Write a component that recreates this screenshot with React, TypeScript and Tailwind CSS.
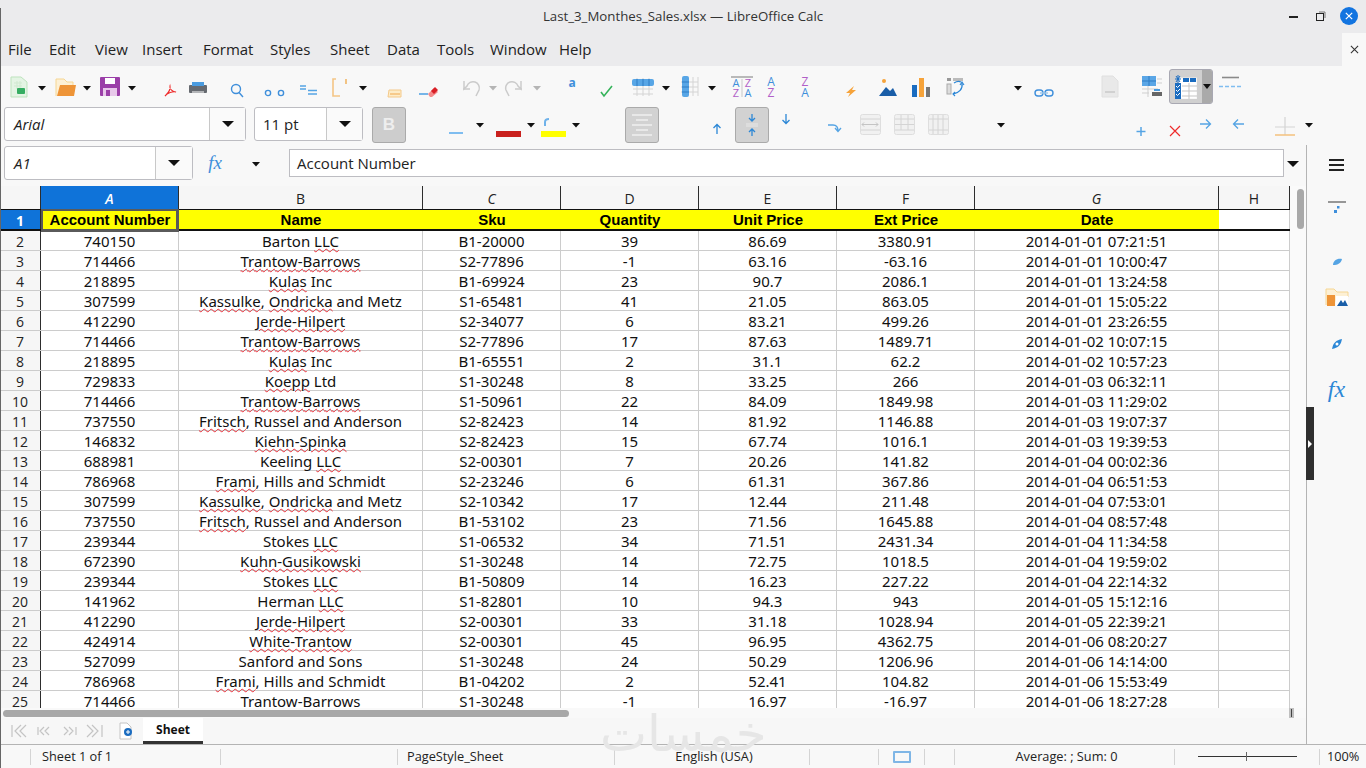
import type { ReactNode } from "react"

const ui = "font-['Open_Sans',sans-serif]"

const rows = [
  [2, "740150", "Barton ~LLC~", "B1-20000", "39", "86.69", "3380.91", "2014-01-01 07:21:51"],
  [3, "714466", "~Trantow-Barrows~", "S2-77896", "-1", "63.16", "-63.16", "2014-01-01 10:00:47"],
  [4, "218895", "~Kulas~ Inc", "B1-69924", "23", "90.7", "2086.1", "2014-01-01 13:24:58"],
  [5, "307599", "~Kassulke~, ~Ondricka~ and Metz", "S1-65481", "41", "21.05", "863.05", "2014-01-01 15:05:22"],
  [6, "412290", "~Jerde-Hilpert~", "S2-34077", "6", "83.21", "499.26", "2014-01-01 23:26:55"],
  [7, "714466", "~Trantow-Barrows~", "S2-77896", "17", "87.63", "1489.71", "2014-01-02 10:07:15"],
  [8, "218895", "~Kulas~ Inc", "B1-65551", "2", "31.1", "62.2", "2014-01-02 10:57:23"],
  [9, "729833", "~Koepp~ Ltd", "S1-30248", "8", "33.25", "266", "2014-01-03 06:32:11"],
  [10, "714466", "~Trantow-Barrows~", "S1-50961", "22", "84.09", "1849.98", "2014-01-03 11:29:02"],
  [11, "737550", "~Fritsch~, Russel and Anderson", "S2-82423", "14", "81.92", "1146.88", "2014-01-03 19:07:37"],
  [12, "146832", "~Kiehn-Spinka~", "S2-82423", "15", "67.74", "1016.1", "2014-01-03 19:39:53"],
  [13, "688981", "Keeling ~LLC~", "S2-00301", "7", "20.26", "141.82", "2014-01-04 00:02:36"],
  [14, "786968", "~Frami~, Hills and Schmidt", "S2-23246", "6", "61.31", "367.86", "2014-01-04 06:51:53"],
  [15, "307599", "~Kassulke~, ~Ondricka~ and Metz", "S2-10342", "17", "12.44", "211.48", "2014-01-04 07:53:01"],
  [16, "737550", "~Fritsch~, Russel and Anderson", "B1-53102", "23", "71.56", "1645.88", "2014-01-04 08:57:48"],
  [17, "239344", "Stokes ~LLC~", "S1-06532", "34", "71.51", "2431.34", "2014-01-04 11:34:58"],
  [18, "672390", "~Kuhn-Gusikowski~", "S1-30248", "14", "72.75", "1018.5", "2014-01-04 19:59:02"],
  [19, "239344", "Stokes ~LLC~", "B1-50809", "14", "16.23", "227.22", "2014-01-04 22:14:32"],
  [20, "141962", "Herman ~LLC~", "S1-82801", "10", "94.3", "943", "2014-01-05 15:12:16"],
  [21, "412290", "~Jerde-Hilpert~", "S2-00301", "33", "31.18", "1028.94", "2014-01-05 22:39:21"],
  [22, "424914", "~White-Trantow~", "S2-00301", "45", "96.95", "4362.75", "2014-01-06 08:20:27"],
  [23, "527099", "Sanford and Sons", "S1-30248", "24", "50.29", "1206.96", "2014-01-06 14:14:00"],
  [24, "786968", "~Frami~, Hills and Schmidt", "B1-04202", "2", "52.41", "104.82", "2014-01-06 15:53:49"],
  [25, "714466", "Trantow-Barrows", "S1-30248", "-1", "16.97", "-16.97", "2014-01-06 18:27:28"],
]

const colWidths = ["w-[138px]", "w-[244px]", "w-[138px]", "w-[138px]", "w-[138px]", "w-[138px]", "w-[244px]", "w-[71px]"]
const headers = ["Account Number", "Name", "Sku", "Quantity", "Unit Price", "Ext Price", "Date"]
const colNames = ["A", "B", "C", "D", "E", "F", "G", "H"]

const menus = [
  { label: "File", cls: "w-[41px]" },
  { label: "Edit", cls: "w-[46px]" },
  { label: "View", cls: "w-[47px]" },
  { label: "Insert", cls: "w-[61px]" },
  { label: "Format", cls: "w-[67px]" },
  { label: "Styles", cls: "w-[60px]" },
  { label: "Sheet", cls: "w-[57px]" },
  { label: "Data", cls: "w-[50px]" },
  { label: "Tools", cls: "w-[53px]" },
  { label: "Window", cls: "w-[69px]" },
  { label: "Help", cls: "w-[50px]" },
]

// every icon sits in a 20x22 box, row centre is y=11
const I = ({ cls = "", children }: { cls?: string; children: ReactNode }) => (
  <svg viewBox="0 0 20 22" className={`w-5 h-[22px] shrink-0 overflow-visible ${cls}`}>
    {children}
  </svg>
)

const Drop = ({ cls = "", color = "#111" }: { cls?: string; color?: string }) => (
  <I cls={cls}>
    <polygon points="6,10 14,10 10,14.5" fill={color} />
  </I>
)

const Name = ({ text }: { text: string }) => (
  <>
    {text.split("~").map((part, i) =>
      i % 2 === 1 ? (
        <span key={i} className="underline decoration-wavy decoration-[#e8303a] decoration-1 underline-offset-1">
          {part}
        </span>
      ) : (
        <span key={i}>{part}</span>
      ),
    )}
  </>
)

const TableIcon = ({ cls = "", children }: { cls?: string; children?: ReactNode }) => (
  <I cls={cls}>
    <rect x="0.500" y="0.500" width="20" height="20" rx="2" fill="#f1f1f1" stroke="#dedede" />
    <path d="M1 5h19M1 16h19" stroke="#d4d4d4" fill="none" />
    {children}
  </I>
)

function ToolbarOne() {
  return (
    <div className="h-[41px] flex items-center pl-[9px] bg-[#f8f8f8]">
      <I>
        <path d="M2 1h10l6 5v15H2z" fill="#e4f4e4" stroke="#bde3bd" />
        <path d="M5 7h8M5 10h8M8 5v8M11 5v8" stroke="#cfe8cf" />
        <rect x="8" y="12" width="8" height="6" rx="1" fill="#36ad62" />
      </I>
      <Drop cls="ml-[3px]" />
      <I cls="ml-[3px]">
        <path d="M1 20V3h8l3 3h6v4" fill="#fdf0d4" stroke="#f6d693" />
        <polygon points="2,20 5,9 21,9 19,20" fill="#ee9437" />
      </I>
      <Drop cls="ml-[2px]" />
      <I cls="ml-[3px]">
        <rect x="0" y="1" width="20" height="19" rx="1" fill="#9b3fa8" />
        <rect x="5" y="2" width="10" height="6" fill="#fff" />
        <rect x="3" y="12" width="14" height="8" fill="#e8c8ea" />
        <rect x="6" y="14" width="4" height="6" fill="#9b3fa8" />
      </I>
      <Drop cls="ml-[2px]" />
      <I cls="ml-[18px]">
        <path d="M10 10c1 5-3 8-5 10 2-3 8-5 11-4-3 0-7-3-6-6z" fill="none" stroke="#ef2b2b" strokeWidth="1.1" />
      </I>
      <I cls="ml-[8px]">
        <rect x="1" y="9" width="18" height="8" rx="1" fill="#666a70" />
        <rect x="4" y="6" width="12" height="4" fill="#4a9bdf" />
        <rect x="4" y="15" width="12" height="2" fill="#fff" opacity=".5" />
      </I>
      <I cls="ml-[19px]">
        <circle cx="9" cy="13" r="4.5" fill="none" stroke="#3f8fdb" strokeWidth="1.4" />
        <path d="M12 16.5l4 4.5" stroke="#3f8fdb" strokeWidth="1.4" />
      </I>
      <I cls="ml-[17px]">
        <circle cx="4" cy="17" r="2.6" fill="none" stroke="#3f8fdb" strokeWidth="1.4" />
        <circle cx="17" cy="17" r="2.6" fill="none" stroke="#3f8fdb" strokeWidth="1.4" />
      </I>
      <I cls="ml-[14px]">
        <path d="M2 10h6M2 13h6M10 14.5h9M10 18h9" stroke="#55a4e4" strokeWidth="1.6" />
      </I>
      <I cls="ml-[12px]">
        <path d="M6 3H3v17h7" fill="none" stroke="#f4c585" strokeWidth="1.6" />
        <path d="M16 3v5" stroke="#f0b666" strokeWidth="1.6" />
      </I>
      <Drop cls="ml-[3px]" />
      <I cls="ml-[12px]">
        <path d="M4 14h12v7H3z" fill="#fdecc8" stroke="#f4c98a" />
        <path d="M5 18h10" stroke="#f0a84e" />
      </I>
      <I cls="ml-[13px]">
        <path d="M1 18h9" stroke="#55a4e4" strokeWidth="1.6" />
        <path d="M10 18l6-6 4 4-6 5h-2z" fill="#f58a8a" />
        <path d="M13 15l4-4 3 3-4 4z" fill="#d81f26" />
      </I>
      <I cls="ml-[22px]">
        <path d="M16 20l3-6a6 6 0 0 0-12-4L4 13V5" fill="none" stroke="#cbcbcb" strokeWidth="1.5" />
        <path d="M3 13h7" stroke="#cbcbcb" strokeWidth="1.5" />
      </I>
      <Drop cls="ml-[3px]" color="#b5b5b5" />
      <I cls="ml-[2px]">
        <path d="M4 20l-3-6a6 6 0 0 1 12-4l3 3V5" fill="none" stroke="#cbcbcb" strokeWidth="1.5" />
        <path d="M17 13h-7" stroke="#cbcbcb" strokeWidth="1.5" />
      </I>
      <Drop cls="ml-[2px]" color="#b5b5b5" />
      <I cls="ml-[15px]">
        <text x="10" y="11" textAnchor="middle" fontSize="12" fontWeight="700" fill="#3f8fdb" fontFamily="Open Sans, sans-serif">a</text>
      </I>
      <I cls="ml-[15px]">
        <path d="M4 16l3 4 8-10" fill="none" stroke="#35b35a" strokeWidth="1.6" />
      </I>
      <I cls="ml-[16px]">
        <path d="M4 2v18M10 2v18M16 2v18M0 13h20M0 18h20" stroke="#d4d4d4" />
        <rect x="-1" y="3" width="22" height="7" rx="2" fill="#58a6e6" />
        <path d="M4 3v7M10 3v7M16 3v7" stroke="#2f7cc5" />
      </I>
      <Drop cls="ml-[3px]" />
      <I cls="ml-[3px]">
        <path d="M2 6h17M2 11h17M2 16h17M14 1v19M19 1v19" stroke="#d4d4d4" />
        <rect x="3" y="0" width="7" height="21" rx="2" fill="#58a6e6" />
        <path d="M3 6h7M3 11h7M3 16h7" stroke="#2f7cc5" />
      </I>
      <Drop cls="ml-[3px]" />
      <I cls="ml-[10px]">
        <path d="M-1 1h22" stroke="#8f8f8f" strokeWidth="1.2" />
        <path d="M10 3v18" stroke="#c8c8c8" />
        <g fontSize="11" fontFamily="Open Sans, sans-serif" textAnchor="middle">
          <text x="4" y="11" fill="#3f8fdb">A</text>
          <text x="4" y="21" fill="#b15fc8">Z</text>
          <text x="16" y="11" fill="#b15fc8">Z</text>
          <text x="16" y="21" fill="#3f8fdb">A</text>
        </g>
      </I>
      <I cls="ml-[9px]">
        <g fontSize="12" fontFamily="Open Sans, sans-serif" textAnchor="middle">
          <text x="10" y="10" fill="#3f8fdb">A</text>
          <text x="10" y="21" fill="#b15fc8">Z</text>
        </g>
      </I>
      <I cls="ml-[14px]">
        <g fontSize="12" fontFamily="Open Sans, sans-serif" textAnchor="middle">
          <text x="10" y="10" fill="#b15fc8">Z</text>
          <text x="10" y="21" fill="#3f8fdb">A</text>
        </g>
      </I>
      <I cls="ml-[26px]">
        <polygon points="13,10 5,17 9,17 7,21 15,14 11,14" fill="#f6a33a" />
      </I>
      <I cls="ml-[17px]">
        <polygon points="1,20 8,11 12,15 15,12 19,20" fill="#1a5ea8" />
        <circle cx="6" cy="5" r="2" fill="#f6a33a" />
      </I>
      <I cls="ml-[13px]">
        <rect x="1" y="9" width="5" height="12" fill="#1a6cc0" />
        <rect x="8" y="2" width="5" height="19" fill="#f6a33a" />
        <rect x="15" y="11" width="4" height="10" fill="#777" />
      </I>
      <I cls="ml-[14px]">
        <rect x="2" y="2" width="4" height="3" fill="#999" />
        <rect x="8" y="2" width="10" height="3" fill="#bbb" />
        <rect x="2" y="8" width="4" height="10" fill="#ddd" stroke="#aaa" />
        <path d="M17 7c1 6-3 10-9 11M9 7c3-2 5-2 7-1" fill="none" stroke="#2c87d6" strokeWidth="1.3" />
        <path d="M15 9l2-3 2 3M10 16l-2 2 2 2" fill="none" stroke="#2c87d6" strokeWidth="1.1" />
      </I>
      <Drop cls="ml-[43px]" />
      <I cls="ml-[6px]">
        <rect x="1" y="14" width="8" height="6" rx="3" fill="none" stroke="#3f8fdb" strokeWidth="1.4" />
        <rect x="11" y="14" width="8" height="6" rx="3" fill="none" stroke="#3f8fdb" strokeWidth="1.4" />
        <path d="M6 17h8" stroke="#9cc6ea" strokeWidth="1.4" />
      </I>
      <I cls="ml-[46px]">
        <path d="M2 0h11l5 5v16H2z" fill="#e9e9e9" stroke="#e0e0e0" />
        <path d="M5 16h10" stroke="#c9c9c9" strokeWidth="1.5" />
      </I>
      <I cls="ml-[22px]">
        <rect x="0" y="0" width="14" height="10" fill="#5aa6e6" />
        <path d="M0 5h14M7 0v10" stroke="#2f7cc5" />
        <path d="M15 3h5M15 7h5M0 13h16M6 10v11M0 17h7" stroke="#cfcfcf" />
        <rect x="10" y="16" width="10" height="4" fill="#666" />
        <rect x="12" y="13" width="6" height="2" fill="#4a9bdf" />
      </I>
      <div className="ml-[7px] w-[44px] h-[35px] flex rounded-[3px] border border-[#a8a8b2] bg-[#d0d0d0] shrink-0 overflow-hidden">
        <div className="w-[32px] flex items-center justify-center">
          <svg viewBox="0 0 22 24" className="w-[22px] h-6">
            <rect x="4" y="3" width="18" height="21" fill="#fff" stroke="#f0f0f0" />
            <path d="M7 11h15M7 16h15M7 21h15M14 8v16" stroke="#c5c5c5" />
            <rect x="0" y="8" width="6" height="16" fill="#1a6cc0" />
            <path d="M1 11l1.5 1.5L5 10M1 15l1.5 1.5L5 14M1 19l1.5 1.5L5 18" fill="none" stroke="#fff" />
            <rect x="8" y="3" width="6" height="4" fill="#1a6cc0" />
            <rect x="15" y="3" width="6" height="4" fill="#1a6cc0" />
            <path d="M3 0v8M0 4h6M1 1l4 6M5 1l-4 6" stroke="#1a6cc0" />
          </svg>
        </div>
        <div className="flex-1 bg-[#aaaaaa] flex items-center justify-center">
          <span className="w-0 h-0 border-x-4 border-x-transparent border-t-[5px] border-t-[#111]" />
        </div>
      </div>
      <I cls="ml-[6px]">
        <path d="M3 1.5h17" stroke="#8a8a8a" strokeWidth="1.6" />
        <path d="M0 10.5h23" stroke="#7fbdf0" strokeWidth="1.5" strokeDasharray="4 2" />
      </I>
    </div>
  )
}

function ToolbarTwo() {
  return (
    <div className={`h-[38px] flex items-start pl-1 bg-[#f8f8f8] text-[15px] text-[#222] ${ui}`}>
      <div className="w-[242px] h-[34px] flex shrink-0 rounded-[3px] border border-[#bdbdc2] bg-white">
        <div className="w-[204px] pl-[9px] flex items-center italic">Arial</div>
        <div className="flex-1 border-l border-[#c8c8c8] bg-[#fafafa] flex items-center justify-center">
          <span className="w-0 h-0 border-x-[6px] border-x-transparent border-t-[6px] border-t-[#111]" />
        </div>
      </div>
      <div className="ml-2 w-[109px] h-[34px] flex shrink-0 rounded-[3px] border border-[#bdbdc2] bg-white">
        <div className="w-[71px] pl-[8px] flex items-center">11 pt</div>
        <div className="flex-1 border-l border-[#c8c8c8] bg-[#fafafa] flex items-center justify-center">
          <span className="w-0 h-0 border-x-[6px] border-x-transparent border-t-[6px] border-t-[#111]" />
        </div>
      </div>
      <div className="ml-[9px] w-[34px] h-9 shrink-0 rounded-[3px] border border-[#aaa] bg-[#cdcdcd] flex items-center justify-center font-['Liberation_Sans',sans-serif] text-[17px] font-bold text-[#eee]">
        B
      </div>
      <div className="ml-[43px] w-[14px] h-[27px] shrink-0 flex items-end">
        <div className="w-full h-[2px] bg-[#7fbdf0]" />
      </div>
      <Drop cls="ml-[7px] mt-[6px]" />
      <div className="ml-[6px] w-[25px] h-[30px] shrink-0 flex items-end">
        <div className="w-full h-[6px] bg-[#c9211e]" />
      </div>
      <Drop cls="mt-[6px]" />
      <div className="w-[25px] h-[30px] shrink-0 flex flex-col justify-end">
        <svg viewBox="0 0 25 14" className="w-[25px] h-[14px]">
          <path d="M4 9V5c0-2 1-3 4-3" fill="none" stroke="#6fb2ea" strokeWidth="2" />
        </svg>
        <div className="w-full h-[6px] bg-[#ffff00]" />
      </div>
      <Drop cls="mt-[6px]" />
      <div className="ml-[39px] w-[34px] h-9 shrink-0 rounded-[3px] border border-[#aaa] bg-[#d2d2d2] flex flex-col items-center justify-center gap-[3px]">
        <div className="w-5 h-[2px] bg-[#e8e8e8]" />
        <div className="w-3 h-[2px] bg-[#e8e8e8]" />
        <div className="w-5 h-[2px] bg-[#e8e8e8]" />
        <div className="w-3 h-[2px] bg-[#e8e8e8]" />
        <div className="w-5 h-[2px] bg-[#e8e8e8]" />
      </div>
      <I cls="ml-[48px] mt-[7px]">
        <path d="M10 20V11M6.5 14L10 10.5l3.5 3.5" fill="none" stroke="#2c87d6" strokeWidth="1.3" />
      </I>
      <div className="ml-[8px] w-[34px] h-9 shrink-0 rounded-[3px] border border-[#aaa] bg-[#d2d2d2] flex items-center justify-center">
        <svg viewBox="0 0 20 26" className="w-5 h-[26px]">
          <path d="M4 12h12M4 14h12" stroke="#e8e8e8" />
          <path d="M10 2v7M7 6l3 3 3-3M10 24v-7M7 20l3-3 3 3" fill="none" stroke="#2c87d6" strokeWidth="1.3" />
        </svg>
      </div>
      <I cls="ml-[7px] mt-[4px]">
        <path d="M10 3v9M6.5 9l3.5 3.5L13.500 9" fill="none" stroke="#2c87d6" strokeWidth="1.3" />
      </I>
      <I cls="ml-[28px] mt-[7px]">
        <path d="M4 11h5c3 0 5 2 5 6M11 14l3 3.500 3-3.500" fill="none" stroke="#55a4e4" strokeWidth="1.300" />
      </I>
      <TableIcon cls="ml-[16px] mt-[7px]">
        <path d="M2 10.500h16M4 8.500l-2 2 2 2M16 8.500l2 2-2 2" fill="none" stroke="#c4c4c4" />
      </TableIcon>
      <TableIcon cls="ml-[14px] mt-[7px]">
        <path d="M7 1v15M14 1v15M1 10.500h19" stroke="#d4d4d4" />
      </TableIcon>
      <TableIcon cls="ml-[14px] mt-[7px]">
        <path d="M5 1v19M10 1v19M15 1v19" stroke="#d4d4d4" />
      </TableIcon>
      <Drop cls="ml-[43px] mt-[6px]" />
      <I cls="ml-[120px] mt-[9px]">
        <path d="M10 11v9M5.500 15.500h9" stroke="#55a4e4" strokeWidth="1.500" />
      </I>
      <I cls="ml-[14px] mt-[9px]">
        <path d="M5 10l10 10M15 10L5 20" stroke="#ee2b2b" strokeWidth="1.200" />
      </I>
      <I cls="ml-[10px] mt-[10px]">
        <path d="M5 7h10M11 2.500L15.500 7 11 11.500" fill="none" stroke="#55a4e4" strokeWidth="1.300" />
      </I>
      <I cls="ml-[14px] mt-[10px]">
        <path d="M15 7H5M9 2.500L4.500 7 9 11.500" fill="none" stroke="#55a4e4" strokeWidth="1.300" />
      </I>
      <I cls="ml-[26px] mt-[10px]">
        <path d="M10 0v18M0 10h20" stroke="#d4d4d4" strokeWidth="1.200" />
        <path d="M0 18h20" stroke="#f4c585" strokeWidth="1.600" />
      </I>
      <Drop cls="ml-[4px] mt-[6px]" />
    </div>
  )
}

function Sheet() {
  return (
    <div className="h-[522px] shrink-0 flex bg-white overflow-hidden">
      <div className="w-[1290px] shrink-0">
        <div className={`h-[23px] flex bg-[#f6f6f6] text-[14px] text-[#222] ${ui}`}>
          <div className="w-[41px] shrink-0 border-r border-[#2d2d2d]" />
          {colNames.map((c, i) => (
            <div
              key={c}
              className={`${colWidths[i]} shrink-0 border-r border-[#2d2d2d] pt-[2px] flex items-center justify-center ${
                c === "A" ? "bg-[#0f73d9] text-white italic font-semibold" : c === "C" || c === "G" ? "italic" : ""
              }`}
            >
              {c}
            </div>
          ))}
        </div>
        <div className="h-[22px] flex border-t border-b-2 border-[#111] relative">
          <div className={`w-[41px] shrink-0 bg-[#0f73d9] text-white text-[14px] font-bold pt-[2px] flex items-center justify-center border-r border-[#2d2d2d] ${ui}`}>
            1
          </div>
          {headers.map((h, i) => (
            <div
              key={h}
              className={`${colWidths[i]} shrink-0 bg-[#ffff00] pt-[2px] flex items-center justify-center font-['Liberation_Sans',sans-serif] text-[15px] font-bold text-black`}
            >
              {h}
            </div>
          ))}
          <div className="w-[71px] shrink-0 border-r border-[#ccc]" />
          <div className="absolute left-[41px] -top-px w-[138px] h-[23px] border-2 border-r-[3px] border-b-[3px] border-[#5a5a5a]" />
        </div>
        {rows.map((r) => (
          <div key={r[0]} className="h-5 flex border-b border-[#cccccc] font-['Noto_Sans',sans-serif] text-[15px] leading-[21px] text-[#111]">
            <div className={`w-[41px] shrink-0 bg-[#f6f6f6] border-r border-[#2d2d2d] text-center text-[14px] text-[#222] ${ui}`}>{r[0]}</div>
            {r.slice(1).map((v, i) => (
              <div key={i} className={`${colWidths[i]} shrink-0 text-center border-r border-[#cccccc] whitespace-nowrap`}>
                {i === 1 ? <Name text={String(v)} /> : v}
              </div>
            ))}
            <div className="w-[71px] shrink-0 border-r border-[#cccccc]" />
          </div>
        ))}
      </div>
      <div className="flex-1 bg-[#fafafa] pl-[7px] pt-[3px]">
        <div className="w-[7px] h-10 rounded-full bg-[#a9a9a9]" />
      </div>
    </div>
  )
}

export default function App() {
  return (
    <div className={`relative w-[1366px] h-[768px] flex flex-col overflow-hidden bg-[#f8f8f8] ${ui}`}>
      <div className="h-[33px] shrink-0 bg-[#ebebed] flex items-center relative">
        <div className="w-full text-center text-[13.25px] text-[#333]">Last_3_Monthes_Sales.xlsx — LibreOffice Calc</div>
        <div className="absolute right-2 top-[7px] flex items-center">
          <div className="w-[9px] h-[2px] mt-[2px] bg-[#222]" />
          <svg viewBox="0 0 10 10" className="ml-[18px] w-[10px] h-[10px]">
            <rect x="0.500" y="2.500" width="7" height="7" fill="none" stroke="#222" />
            <path d="M3 1h6v6" fill="none" stroke="#777" />
          </svg>
          <div className="ml-[14px] w-[18px] h-[18px] rounded-full bg-[#1274e0] text-white flex items-center justify-center">
            <svg viewBox="0 0 10 10" className="w-2 h-2"><path d="M1 1l8 8M9 1l-8 8" stroke="#fff" strokeWidth="1.500" /></svg>
          </div>
        </div>
      </div>

      <div className="h-[33px] shrink-0 flex items-stretch bg-[#ebebed] pl-[8px] text-[15px] text-[#222]">
        <div className="flex items-center flex-1">
          {menus.map((m) => (
            <div key={m.label} className={m.cls}>{m.label}</div>
          ))}
        </div>
        <div className="w-[24px] bg-[#f8f8f8] flex items-center justify-center">
          <svg viewBox="0 0 10 10" className="w-[9px] h-[9px]"><path d="M1 1l8 8M9 1l-8 8" stroke="#333" strokeWidth="1.200" /></svg>
        </div>
      </div>

      <ToolbarOne />
      <ToolbarTwo />

      <div className="flex-1 flex min-h-0">
        <div className="w-[1306px] shrink-0 flex flex-col">
          <div className="h-[41px] shrink-0 flex items-start pl-1 pt-px text-[15px] text-[#222]">
            <div className="w-[189px] h-[34px] flex shrink-0 rounded-[3px] border border-[#bdbdc2] bg-white">
              <div className="w-[150px] pl-[9px] flex items-center italic">A1</div>
              <div className="flex-1 border-l border-[#c8c8c8] bg-[#fafafa] flex items-center justify-center">
                <span className="w-0 h-0 border-x-[6px] border-x-transparent border-t-[6px] border-t-[#111]" />
              </div>
            </div>
            <div className="ml-[12px] w-5 h-[34px] flex items-center justify-center font-['Liberation_Serif',serif] italic text-[19px] text-[#3f8fdb]">fx</div>
            <Drop cls="ml-[21px] mt-[6px]" />
            <div className="ml-[23px] w-[995px] h-7 mt-[3px] shrink-0 border border-[#bdbdc2] bg-white pl-[7px] flex items-center">Account Number</div>
            <div className="ml-[3px] mt-[15px] w-0 h-0 border-x-[6px] border-x-transparent border-t-[6px] border-t-[#111]" />
          </div>

          <Sheet />

          <div className="h-[10px] shrink-0 bg-[#f9f9f9] flex items-center pl-[3px] pr-[12px]">
            <div className="w-[566px] h-[7px] rounded-full bg-[#a8a8a8]" />
            <div className="ml-auto w-[5px] h-[10px] bg-[#c0c0c0] flex justify-center"><div className="w-px h-2 mt-px bg-[#444]" /></div>
          </div>

          <div className="h-[26px] shrink-0 flex items-center pl-[10px] bg-[#f7f7f7]">
            <svg viewBox="0 0 94 14" className="w-[94px] h-[16px]">
              <g fill="none" stroke="#c4c4c4" strokeWidth="1.200">
                <path d="M2 1v12M11 1L5 7l6 6M16 1l-6 6 6 6" />
                <path d="M28 3v8M34 3l-4 4 4 4M39 3l-4 4 4 4" />
                <path d="M54 3l4 4-4 4M59 3l4 4-4 4M66 3v8" />
                <path d="M77 1l6 6-6 6M82 1l6 6-6 6M92 1v12" />
              </g>
            </svg>
            <svg viewBox="0 0 14 18" className="ml-[15px] w-[14px] h-[18px]">
              <path d="M1 1h7l4 4v12H1z" fill="#fff" stroke="#c4c4c4" />
              <circle cx="9" cy="10" r="4" fill="#1a6cc0" />
              <path d="M7 10h4M9 8v4" stroke="#fff" />
            </svg>
            <div className="ml-[10px] w-[60px] h-[26px] bg-white border-b-[3px] border-[#333] flex items-center justify-center text-[12px] font-bold text-[#111]">Sheet</div>
          </div>
        </div>

        <div className="flex-1 border-l border-[#b4b4b4] bg-[#f8f8f8] relative flex flex-col items-center">
          <div className="mt-[14px] w-[15px] flex flex-col gap-[3px]">
            <div className="h-[2px] bg-[#222]" />
            <div className="h-[2px] bg-[#222]" />
            <div className="h-[2px] bg-[#222]" />
          </div>
          <svg viewBox="0 0 20 16" className="mt-[30px] w-5 h-4">
            <path d="M1 1h18" stroke="#777" strokeWidth="1.500" />
            <rect x="10" y="5" width="2.500" height="2.500" fill="#3f8fdb" />
            <rect x="7" y="9" width="3" height="3" fill="#3f8fdb" />
          </svg>
          <svg viewBox="0 0 12 10" className="mt-[39px] w-3 h-[10px]">
            <path d="M2 9c0-4 4-7 9-6-1 4-4 6-9 6z" fill="#55a4e4" />
          </svg>
          <svg viewBox="0 0 24 20" className="mt-[21px] w-6 h-5">
            <path d="M1 18V2h8l3 3h11v5" fill="#fdf0d4" stroke="#f6d693" />
            <rect x="2" y="8" width="8" height="11" fill="#ee9437" />
            <rect x="11" y="9" width="12" height="10" fill="#fff" />
            <polygon points="12,19 16,13 18,16 20,13 23,19" fill="#1a5ea8" />
          </svg>
          <svg viewBox="0 0 12 12" className="mt-[31px] w-3 h-3">
            <path d="M1 11c1-6 4-9 10-10-1 6-4 9-10 10z" fill="#2c87d6" />
            <circle cx="6" cy="6" r="1.500" fill="#fff" />
          </svg>
          <div className="mt-[27px] font-['Liberation_Serif',serif] italic text-[24px] leading-6 text-[#2c87d6]">fx</div>
          <div className="absolute -left-px top-[262px] w-2 h-[73px] bg-[#2f2f2f] flex items-center justify-center">
            <span className="w-0 h-0 border-y-[4px] border-y-transparent border-l-[4px] border-l-white" />
          </div>
        </div>
      </div>

      <div className="h-6 shrink-0 border-t border-[#b4b4b4] flex items-center text-[12.75px] text-[#222] bg-[#f8f8f8]">
        <div className="w-[31px] h-4 border-r border-[#d4d4d4]" />
        <div className="w-[190px] h-4 pl-[11px] border-r border-[#d4d4d4] flex items-center">Sheet 1 of 1</div>
        <div className="w-[177px] h-4 border-r border-[#d4d4d4]" />
        <div className="w-[217px] h-4 pl-[9px] border-r border-[#d4d4d4] flex items-center">PageStyle_Sheet</div>
        <div className="w-[195px] h-4 pl-[4px] border-r border-[#d4d4d4] flex items-center justify-center">English (USA)</div>
        <div className="w-[69px] h-4 border-r border-[#d4d4d4]" />
        <div className="w-[46px] h-4 border-r border-[#d4d4d4] flex items-center justify-center">
          <div className="w-[18px] h-3 border-2 border-[#7fb6e6] rounded-[1px]" />
        </div>
        <div className="w-[30px] h-4 border-r border-[#d4d4d4]" />
        <div className="w-[220px] h-4 pl-[4px] border-r border-[#d4d4d4] flex items-center justify-center">Average: ; Sum: 0</div>
        <div className="w-[145px] h-4 border-r border-[#d4d4d4] flex items-center justify-center">
          <div className="w-[99px] h-px bg-[#333] relative">
            <div className="absolute left-[48px] -top-1 w-px h-[9px] bg-[#666]" />
          </div>
        </div>
        <div className="pl-[7px]">100%</div>
      </div>

      <div className="absolute left-0 top-2 bottom-0 w-px bg-[#666]" />
      <div className="absolute left-[600px] top-[709px] text-[50px] leading-none text-[#e6e6e6] font-['DejaVu_Sans',sans-serif] pointer-events-none" dir="rtl">
        خمسات
      </div>
    </div>
  )
}
